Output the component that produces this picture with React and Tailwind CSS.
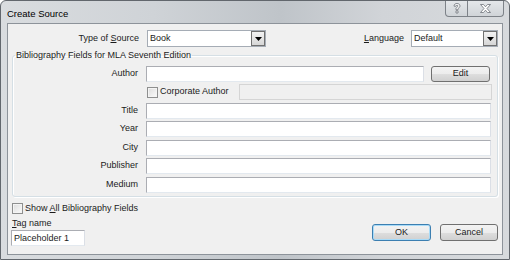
import React from 'react';

const btnBg = 'bg-[linear-gradient(#f3f3f3_0%,#ececec_50%,#dedede_51%,#d0d0d0_100%)]';

const Checkbox = () => (
  <div className="w-[11px] h-[11px] border border-[#8e8f8f] bg-[linear-gradient(135deg,#dcdcdc,#fbfbfb)] shadow-[inset_0_0_0_1px_#f4f4f4] shrink-0" />
);

const Combo = ({ value, width }) => (
  <div className={`${width} h-[17px] border border-[#a5acb5] bg-white flex items-center justify-between`}>
    <span className="pl-[2px] leading-[15px]">{value}</span>
    <div className="w-[14px] h-[15px] border border-[#707070] bg-[linear-gradient(#f2f2f2,#d6d6d6)] flex items-center justify-center">
      <svg width="7" height="4" viewBox="0 0 7 4">
        <path d="M0 0 L7 0 L3.5 4 Z" fill="#000" />
      </svg>
    </div>
  </div>
);

const TextBox = ({ width }) => (
  <div className={`${width} h-[16px] border border-[#abadb3] border-b-[#e3e9ef] border-r-[#dbdfe6] bg-white`} />
);

const FieldRow = ({ label, mt, children }) => (
  <div className={`flex items-center h-[16px] ${mt}`}>
    <div className="w-[126px] text-right pr-[1px]">{label}</div>
    <div className="ml-[7px] flex items-center">{children}</div>
  </div>
);

export default function App() {
  return (
    <div className="w-[510px] h-[260px] font-['Liberation_Sans',Arial,sans-serif] text-[9px] text-[#1b1b1b]">
      <div className="w-full h-full flex flex-col border border-[#62676d] rounded-t-[6px] bg-[linear-gradient(90deg,#d9dcdf_0%,#cfd3d7_30%,#bfc4c9_55%,#d1d4d8_75%,#d7dadd_100%)]">
        {/* Title bar */}
        <div className="h-[22px] flex items-start justify-between shrink-0">
          <div className="pl-[6px] pt-[6px] text-[9.5px] text-black">Create Source</div>
          <div className="flex mr-[5px]">
            <div className="w-[23px] h-[16px] border border-t-0 border-[#7d8288] rounded-bl-[4px] bg-[linear-gradient(#e4e7ea,#d0d4d8)] flex items-center justify-center">
              <svg width="8" height="11" viewBox="0 0 8 11">
                <path d="M1 3.2 C1 1.3 2.4 0.5 4 0.5 C5.8 0.5 7 1.5 7 3 C7 4.4 5.6 5 5 5.6 L5 6.8 L3 6.8 L3 5.1 C3.6 4.2 5 3.9 5 3 C5 2.5 4.6 2.3 4 2.3 C3.4 2.3 3 2.6 3 3.2 Z M3 7.8 L5 7.8 L5 10 L3 10 Z" fill="#fff" stroke="#6d7278" strokeWidth="0.8" />
              </svg>
            </div>
            <div className="w-[36px] h-[16px] border border-t-0 border-l-0 border-[#7d8288] rounded-br-[4px] bg-[linear-gradient(#e4e7ea,#d0d4d8)] flex items-center justify-center">
              <svg width="11" height="9" viewBox="0 0 11 9">
                <path d="M0.5 0.5 L3.5 0.5 L5.5 2.8 L7.5 0.5 L10.5 0.5 L7 4.5 L10.5 8.5 L7.5 8.5 L5.5 6.2 L3.5 8.5 L0.5 8.5 L4 4.5 Z" fill="#fff" stroke="#6d7278" strokeWidth="0.8" />
              </svg>
            </div>
          </div>
        </div>

        {/* Client area */}
        <div className="mx-[6px] h-[232px] border border-[#8d939a] bg-[#f0f0f0] flex flex-col pt-[6px] pr-[4px]">
          {/* Source / language row */}
          <div className="flex items-center h-[17px]">
            <div className="w-[131px] text-right">
              Type of <span className="underline">S</span>ource
            </div>
            <div className="ml-[8px]">
              <Combo value="Book" width="w-[119px]" />
            </div>
            <div className="flex-1 text-right">
              <span className="underline">L</span>anguage
            </div>
            <div className="ml-[7px]">
              <Combo value="Default" width="w-[87px]" />
            </div>
          </div>

          {/* Bibliography group */}
          <fieldset className="ml-[4px] mt-[3px] w-[486px] border border-[#d5dfe5] rounded-[3px] shadow-[inset_1px_1px_0_#fff,1px_1px_0_#fff] pb-[3px]">
            <legend className="ml-[2px] px-[1px] leading-[11px]">Bibliography Fields for MLA Seventh Edition</legend>
            <FieldRow label="Author" mt="mt-[5px]">
              <TextBox width="w-[278px]" />
              <div className={`ml-[7px] w-[59px] h-[16px] border border-[#707070] rounded-[3px] ${btnBg} flex items-center justify-center`}>Edit</div>
            </FieldRow>
            <div className="flex items-center h-[16px] mt-[2px]">
              <div className="w-[134px]" />
              <Checkbox />
              <span className="ml-[2px]">Corporate Author</span>
              <div className="ml-[10px] w-[253px] h-[16px] border border-[#d5d5d5] bg-[#f0f0f0]" />
            </div>
            <FieldRow label="Title" mt="mt-[3px]"><TextBox width="w-[345px]" /></FieldRow>
            <FieldRow label="Year" mt="mt-[2px]"><TextBox width="w-[345px]" /></FieldRow>
            <FieldRow label="City" mt="mt-[3px]"><TextBox width="w-[345px]" /></FieldRow>
            <FieldRow label="Publisher" mt="mt-[2px]"><TextBox width="w-[345px]" /></FieldRow>
            <FieldRow label="Medium" mt="mt-[3px]"><TextBox width="w-[345px]" /></FieldRow>
          </fieldset>

          {/* Show all */}
          <div className="flex items-center ml-[4px] mt-[6px] h-[11px]">
            <Checkbox />
            <span className="ml-[2px]">Show <span className="underline">A</span>ll Bibliography Fields</span>
          </div>

          {/* Tag name + buttons */}
          <div className="flex items-end justify-between mt-[4px]">
            <div className="flex flex-col">
              <div className="ml-[4px] leading-[11px]"><span className="underline">T</span>ag name</div>
              <div className="ml-[3px] mt-[1px] w-[74px] h-[16px] border border-[#abadb3] border-b-[#e3e9ef] border-r-[#dbdfe6] bg-white pl-[2px] leading-[14px]">Placeholder 1</div>
            </div>
            <div className="flex mb-[5px]">
              <div className={`w-[59px] h-[17px] border border-[#3c7fb1] rounded-[3px] shadow-[inset_0_0_0_1px_#a8dbf8] ${btnBg} flex items-center justify-center`}>OK</div>
              <div className={`ml-[9px] w-[58px] h-[17px] border border-[#707070] rounded-[3px] ${btnBg} flex items-center justify-center`}>Cancel</div>
            </div>
          </div>
        </div>
        <div className="h-[4px]" />
      </div>
    </div>
  );
}
